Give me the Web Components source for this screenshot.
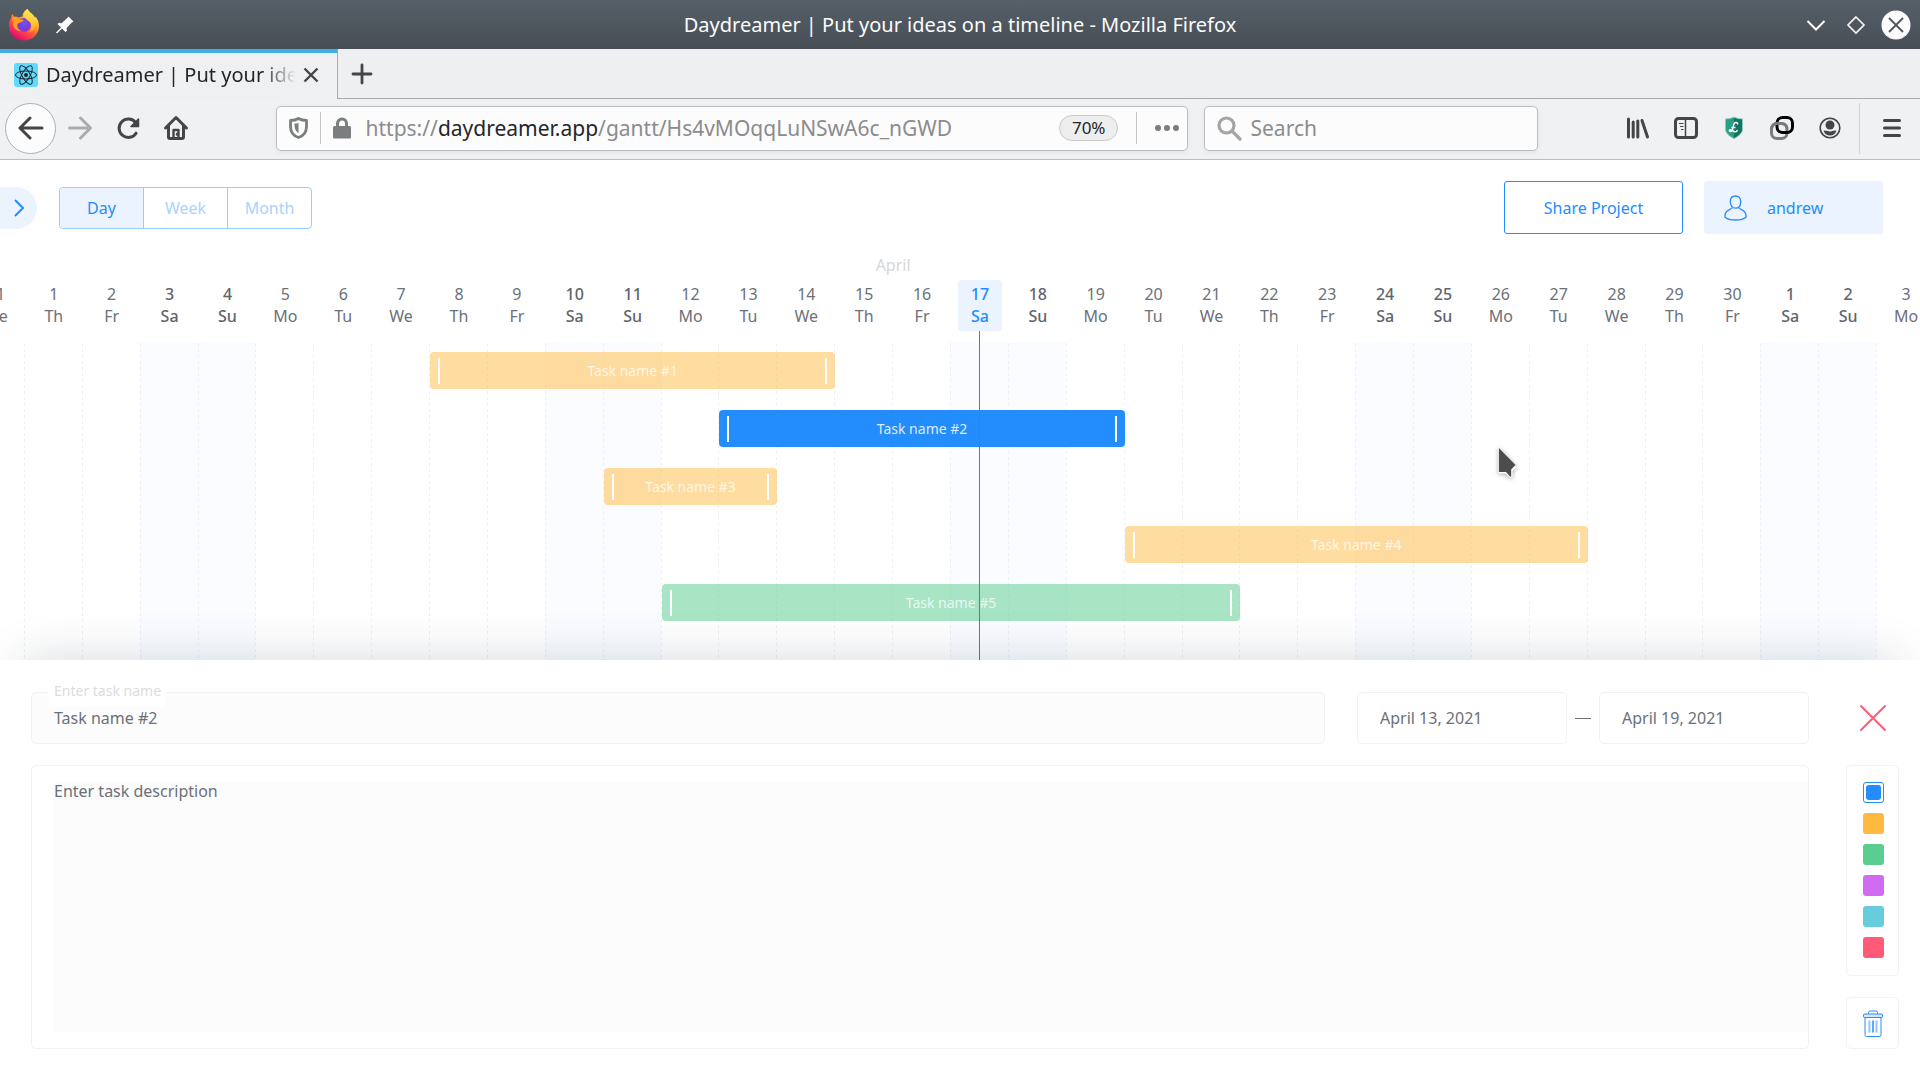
<!DOCTYPE html>
<html lang="en">
<head>
<meta charset="utf-8">
<title>Daydreamer | Put your ideas on a timeline</title>
<style>
  html, body { margin: 0; height: 100%; }
  body {
    font-family: "Noto Sans", sans-serif;
    font-size: 16px;
    color: #6b7178;
    background: #fff;
    --blue: #248dfd;
    --pale: #ebf3ff;
    --line: #f2f2f2;
    --ink: #434547;
  }
</style>
</head>
<body>
<browser-window></browser-window>

<script>
const define = (name, html, setup) => {
  const template = document.createElement('template');
  template.innerHTML = html;
  customElements.define(name, class extends HTMLElement {
    constructor() {
      super();
      this.attachShadow({ mode: 'open' }).append(template.content.cloneNode(true));
    }
    connectedCallback() {
      if (setup && !this.ready) { this.ready = true; setup(this, this.shadowRoot); }
    }
  });
};

const reset = `
  :host, *, *::before, *::after { box-sizing: border-box; }
  button, input, textarea { font: inherit; color: inherit; margin: 0; border: 0; background: none; }
  button { padding: 0; cursor: pointer; }
  svg { display: block; }
`;

/* Icon button used in the title bar and the navigation bar */
define('icon-button', `
<style>${reset}
  :host { display: block; flex: none; width: 48px; color: var(--ink); }
  button { display: flex; width: 100%; height: 48px; align-items: center; justify-content: center; }
</style>
<button><slot></slot></button>`, (el, root) => {
  root.querySelector('button').setAttribute('aria-label', el.getAttribute('label'));
});

define('title-bar', `
<style>${reset}
  :host { display: flex; align-items: center; height: 49px; padding: 0 4px; color: #fcfcfc;
    background: linear-gradient(#566069, #474d54); font-size: 20px; line-height: 28px; }
  .side { display: flex; flex: 1; align-items: center; gap: 16px; }
  .start { padding-left: 5px; }
  .end { justify-content: flex-end; gap: 0; padding-right: 0; }
  .start, .end { flex-basis: 5px; }
  icon-button { width: 40px; color: #fcfcfc; }
</style>
<div class="side start">
  <svg width="30" height="32" viewBox="0 0 30 32">
    <defs>
      <linearGradient id="fox" x1=".85" y1=".1" x2=".3" y2="1">
        <stop offset="0" stop-color="#fff44f"/><stop offset=".3" stop-color="#ffb22e"/>
        <stop offset=".58" stop-color="#ff5a36"/><stop offset="1" stop-color="#e5007d"/>
      </linearGradient>
      <radialGradient id="globe" cx=".5" cy=".35" r=".65">
        <stop offset="0" stop-color="#6a57f0"/><stop offset=".6" stop-color="#7a3bdc"/><stop offset="1" stop-color="#a036c8"/>
      </radialGradient>
      <linearGradient id="tail" x1=".6" y1="0" x2=".4" y2="1">
        <stop offset="0" stop-color="#fff44f"/><stop offset="1" stop-color="#ff9a24"/>
      </linearGradient>
    </defs>
    <path fill="url(#fox)" d="M18.500 0c1 2.500 3.500 4 5.500 6 1 1 1.500 2 2 3l.5-1.500c2.500 3 3.500 6.500 3.500 9.500 0 8.500-6.800 14.500-15 14.500S0 25 0 17c0-3.500.8-6 2.300-8.500l.3-2.500c.2-.3.600-.7 1-1 .3 1.200.8 2 1.400 2.600 1.500-.3 3 0 4.500 1l4-1c0-3 2-6 5-7.600z"/>
    <circle cx="15" cy="16" r="7" fill="url(#globe)"/>
    <path fill="url(#tail)" d="M18.500 0c1 2.500 3.500 4 5.500 6 3 3.500 3.500 8 2 12-1.400 3.500-4 5-6.500 5.500 3-2.500 4-6.500 1.500-10-1.500-2-3.500-2.500-6-5.500-1.500-3 .5-6.500 3.500-8z"/>
    <path fill="#ff9b1f" d="M3 9c3-2 6-1 8 1.500h3.500c.3 1.500-1.500 2.500-3.500 3l-2.500 1.500c-1 2.500 1 6.500 4.500 7.500-5 0-9-3.500-9-8 0-2-.5-3.500-1-5.500z"/>
  </svg>
  <svg width="20" height="20" viewBox="0 0 20 20" fill="#fcfcfc">
    <path d="M13.500 1.500l5 5-2 1.300-5 5.500.5 2.500-1.500 1.200-3.500-3.500L2 18.500l-1-1 5-5L2.500 9 4 7.800l2.500.4 5.500-5z"/>
  </svg>
</div>
<span>Daydreamer | Put your ideas on a timeline - Mozilla Firefox</span>
<div class="side end">
  <icon-button label="Minimize"><svg width="20" height="20" fill="none" stroke="currentColor" stroke-width="2"><path d="M1.500 6L10 14.500 18.500 6"/></svg></icon-button>
  <icon-button label="Maximize"><svg width="20" height="20" fill="none" stroke="currentColor" stroke-width="1.600"><path d="M10 2l8 8-8 8-8-8z"/></svg></icon-button>
  <icon-button label="Close window"><svg width="30" height="30"><circle cx="15" cy="15" r="14.500" fill="currentColor"/><path d="M8 8l14 14M22 8L8 22" stroke="#4d565e" stroke-width="1.800"/></svg></icon-button>
</div>`);

define('tab-strip', `
<style>${reset}
  :host { display: flex; height: 50px; background: #eeeff1; color: #232629; font-size: 20px; line-height: 28px; }
  .tab { display: flex; width: 338px; align-items: center; padding: 0 0 2px 14px;
    border-top: 4px solid #3daee9; border-right: 1px solid #a8aaad; background: #eff0f2; }
  .tab span { flex: 1; margin-left: 8px; overflow: hidden; white-space: nowrap;
    -webkit-mask-image: linear-gradient(90deg, #000 215px, transparent 250px);
    mask-image: linear-gradient(90deg, #000 215px, transparent 250px); }
  .tab icon-button { width: 32px; margin-right: 10px; }
  .rest { display: flex; flex: 1; align-items: center; border-bottom: 1px solid #a8aaad; }
</style>
<div class="tab">
  <svg width="24" height="24" viewBox="0 0 24 24" fill="none" stroke="#20232a">
    <rect width="24" height="24" rx="3" fill="#61dafb" stroke="none"/>
    <ellipse cx="12" cy="12" rx="10.500" ry="4"/>
    <ellipse cx="12" cy="12" rx="10.500" ry="4" transform="rotate(60 12 12)"/>
    <ellipse cx="12" cy="12" rx="10.500" ry="4" transform="rotate(120 12 12)"/>
    <circle cx="12" cy="12" r="2" fill="#20232a" stroke="none"/>
  </svg>
  <span>Daydreamer | Put your ideas on a timeline</span>
  <icon-button label="Close tab"><svg width="16" height="16" fill="none" stroke="currentColor" stroke-width="2.400"><path d="M1.500 1.500l13 13M14.500 1.500l-13 13"/></svg></icon-button>
</div>
<div class="rest">
  <icon-button label="New tab"><svg width="22" height="22" fill="none" stroke="currentColor" stroke-width="2.800" stroke-linecap="round"><path d="M11 2v18M2 11h18"/></svg></icon-button>
</div>`);

define('nav-bar', `
<style>${reset}
  :host { display: flex; height: 61px; align-items: center; padding: 0 4px 2px 5px;
    border-bottom: 1px solid #bbbdbf; background: #f0f1f3; font-size: 21px; line-height: 28px; color: #8a8c8e; }
  .back { display: flex; flex: none; width: 51px; height: 51px; align-items: center; justify-content: center;
    color: var(--ink); border: 1px solid #adafb1; border-radius: 50%; background: #fcfcfc; }
  .off { opacity: .4; }
  .space { flex: 5; }
  .field { display: flex; height: 45px; align-items: center; border: 1px solid #bcbec1; border-radius: 5px;
    background: #fcfcfc; box-shadow: 0 1px 5px rgba(0,0,0,.07); }
  .url { flex: 59; padding: 0 8px 0 12px; }
  .search { flex: none; width: 334px; margin-left: 16px; padding-left: 12px; gap: 8px; }
  .search input { flex: 1; min-width: 0; padding: 0; outline: 0; }
  .search input::placeholder { color: #8a8c8e; opacity: 1; }
  .address { flex: 1; margin-left: 15px; white-space: nowrap; outline: 0; }
  .address b { font-weight: 400; color: #232629; }
  .rule { width: 1px; height: 32px; background: #c4c6c8; }
  .rule.a { margin: 0 12px; }
  .rule.b { margin: 0 18px; }
  .zoom { height: 26px; padding: 0 12px; border: 1px solid #c9cacb; border-radius: 13px; background: #eeeeee;
    color: #232629; font-size: 17px; line-height: 24px; }
  .more { display: flex; height: 40px; align-items: center; color: #7b7e7f; }
  .rule.menu { height: 51px; margin: 0 8px 0 5px; background: #d3d4d6; }
</style>
<button class="back" aria-label="Back"><svg width="26" height="24" fill="none" stroke="currentColor" stroke-width="3" stroke-linecap="round" stroke-linejoin="round"><path d="M2 12h22M12 2L2 12l10 10"/></svg></button>
<icon-button class="off" label="Forward"><svg width="24" height="24" fill="none" stroke="currentColor" stroke-width="3" stroke-linecap="round" stroke-linejoin="round"><path d="M1.500 12h21M12.500 2l10 10-10 10"/></svg></icon-button>
<icon-button label="Reload"><svg width="24" height="24" fill="none" stroke="currentColor" stroke-width="3" stroke-linecap="round" stroke-linejoin="round"><path d="M20.100 17.200A9.200 9.200 0 1 1 19.500 6.500"/><path d="M22.500 3v7.500h-7.500z" fill="currentColor" stroke-width="1.500"/></svg></icon-button>
<icon-button label="Home"><svg width="26" height="26" fill="none" stroke="currentColor" stroke-width="3" stroke-linejoin="round" stroke-linecap="round"><path d="M2.500 13L13 2.500 23.500 13M5.500 11v11q0 1.500 1.500 1.500h12q1.500 0 1.500-1.500V11"/><path d="M10.500 23v-8h5v8M14 19v.5" stroke-width="2.400"/></svg></icon-button>
<div class="space"></div>
<div class="field url">
  <svg width="19" height="22" viewBox="0 0 19 22" fill="none" stroke="#7b7e7f" stroke-width="2.800"><path d="M1.500 3.500q4.500 0 8-2 3.500 2 8 2v6c0 6-3.500 9.500-8 11-4.500-1.500-8-5-8-11z" stroke-linejoin="round"/><path d="M9.500 6v10c-2.500-1.500-4-3.500-4-9.500 2 0 3 0 4-.5z" fill="#7b7e7f" stroke="none"/></svg>
  <div class="rule a"></div>
  <svg width="18" height="22" viewBox="0 0 18 22" fill="#7b7e7f"><rect y="9" width="18" height="12.500" rx="1.500"/><path d="M4.500 10V6.500a4.500 4.500 0 0 1 9 0V10" fill="none" stroke="#7b7e7f" stroke-width="3"/></svg>
  <div class="address" role="textbox" aria-label="Address" contenteditable="true" spellcheck="false">https://<b>daydreamer.app</b>/gantt/Hs4vMOqqLuNSwA6c_nGWD</div>
  <button class="zoom">70%</button>
  <div class="rule b"></div>
  <button class="more" aria-label="Page actions"><svg width="24" height="8" fill="currentColor"><circle cx="3" cy="4" r="3"/><circle cx="12" cy="4" r="3"/><circle cx="21" cy="4" r="3"/></svg></button>
</div>
<div class="field search">
  <svg width="25" height="25" fill="none" stroke="#a3a5a7" stroke-width="3.200" stroke-linecap="round"><circle cx="9.500" cy="9.500" r="7.500"/><path d="M15 15l8 8"/></svg>
  <input type="text" placeholder="Search" aria-label="Search">
</div>
<div class="space"></div>
<icon-button label="Library"><svg width="24" height="24" fill="none" stroke="currentColor" stroke-width="3" stroke-linecap="round"><path d="M2.500 3v18M7.200 6v15M11.800 5v16M16 4.500l5.500 16.500"/></svg></icon-button>
<icon-button label="Sidebars"><svg width="24" height="22" fill="none" stroke="currentColor"><rect x="1.500" y="1.500" width="21" height="19" rx="3" stroke-width="3"/><path d="M11.500 2v18" stroke-width="1.500"/><path d="M5 6.500h4.500M6 9.500h3.500M7 12.500h2.500" stroke-width="1.200"/></svg></icon-button>
<icon-button label="LocalCDN"><svg width="20" height="24" viewBox="0 0 20 24"><path d="M10 1q3.500 2 8.500 2v10c0 4-4 7.500-8.500 9.500C5.500 20.500 1.500 17 1.500 13V3Q6.500 3 10 1z" fill="#26a085" stroke="#8fc9bc"/><path d="M10 2q3.500 1.500 8 1.500V13c0 4-4 7-8 9z" fill="#14735f"/><path d="M13.500 8.500c.5-2-2.500-3-3.500-.5-.8 2-1 4.500-2 6.500-1 1.500-3 1-2.500-.2.600-1.300 3 .5 4.500 1.200 1.500.5 3-.2 3.500-1.500M7.500 11.500h4" fill="none" stroke="#fff" stroke-width="1.500"/></svg></icon-button>
<icon-button label="Containers"><svg width="24" height="24" fill="none" stroke-width="3"><rect x="1.500" y="7.500" width="15.500" height="15" rx="5.500" stroke="#7c7c7f"/><rect x="7" y="1.500" width="15.500" height="15" rx="5.500" stroke="#000"/><path d="M1.500 14v-1A5.500 5.500 0 0 1 7 7.500h4.500A5.500 5.500 0 0 1 17 12.500" stroke="#7c7c7f"/></svg></icon-button>
<icon-button label="Account"><svg width="22" height="22"><circle cx="11" cy="11" r="9.800" fill="none" stroke="currentColor" stroke-width="1.600"/><circle cx="11" cy="8" r="4.500" fill="currentColor"/><path d="M4.500 13.500q3 .3 3.500.3 3 1.500 6 0l3.500-.3q-1.500 5-6.500 5t-6.500-5z" fill="currentColor"/></svg></icon-button>
<div class="rule menu"></div>
<icon-button label="Menu"><svg width="20" height="20" fill="none" stroke="currentColor" stroke-width="3" stroke-linecap="round"><path d="M2.500 2.500h15M2.500 10h15M2.500 17.500h15"/></svg></icon-button>`);

/* Day / Week / Month switch */
define('scale-switch', `
<style>${reset}
  :host { display: flex; width: 253px; height: 42px; border: 1px solid #99cbff; border-radius: 4px; overflow: hidden; color: #a9d2ff; }
  button { flex: 1; }
  button + button { border-left: 1px solid #99cbff; }
  .on { color: var(--blue); background: var(--pale); }
</style>
<button class="on" aria-pressed="true">Day</button><button aria-pressed="false">Week</button><button aria-pressed="false">Month</button>`);

define('app-header', `
<style>${reset}
  :host { display: flex; align-items: center; padding: 21px 37px 0 0; color: var(--blue); }
  .handle { display: flex; width: 37px; height: 42px; align-items: center; padding-left: 14px; border-radius: 0 21px 21px 0; background: var(--pale); }
  scale-switch { margin: 0 auto 0 22px; }
  .big { display: flex; width: 179px; height: 53px; align-items: center; justify-content: center; border-radius: 3px; }
  .share { margin-right: 21px; border: 1px solid var(--blue); }
  .user { justify-content: flex-start; gap: 20px; padding-left: 20px; background: var(--pale); }
</style>
<button class="handle" aria-label="Open projects"><svg width="11" height="18" fill="none" stroke="currentColor" stroke-width="2"><path d="M1 1l8 8-8 8"/></svg></button>
<scale-switch></scale-switch>
<button class="big share">Share Project</button>
<button class="big user"><svg width="23" height="26" fill="none" stroke="currentColor" stroke-width="1.300"><path d="M11.500 1C8.200 1 6.300 3 6.300 6.500c0 4 2 6.700 5.200 6.700s5.200-2.700 5.200-6.700C16.700 3 14.800 1 11.500 1z"/><path d="M8 12.800C7 15 1 15 1 20.500v1.800C3 24 6.500 25 11.500 25s8.500-1 10.500-2.700v-1.800c0-5.500-6-5.500-7-7.700"/></svg>andrew</button>`);

/* One task bar with its two resize handles; the name comes through the slot */
define('gantt-task', `
<style>${reset}
  :host { display: flex; align-items: center; justify-content: space-between; min-width: 0; padding: 0 8px; border-radius: 4px;
    background: rgba(255,186,63,.5); color: rgba(255,255,255,.75); font-size: 14px; line-height: 20px; }
  :host([tone="blue"]) { background: var(--blue); color: rgba(255,255,255,.85); }
  :host([tone="green"]) { background: rgba(90,205,144,.52); }
  i { width: 2px; height: 26px; background: #fff; cursor: ew-resize; }
</style>
<i></i><slot></slot><i></i>`);

define('gantt-chart', `
<style>${reset}
  :host { display: flex; flex-direction: column; overflow: hidden; }
  .board { display: grid; flex: 1; grid-template-columns: repeat(34, minmax(0, 1fr)); grid-template-rows: 24px 51px minmax(0, 1fr);
    margin: 0 -15px 0 -33px; padding-top: 22px; }
  .month { grid-area: 1 / 2 / 2 / 32; text-align: center; line-height: 18px; color: #d6d6d6; }
  .day { grid-row: 2; justify-self: center; width: 44px; padding-top: 3px; border-radius: 4px; text-align: center; line-height: 22px; }
  .day span { display: block; }
  .weekend { font-weight: 500; color: #5f656c; }
  .today { color: var(--blue); background: var(--pale); }
  .lane { grid-row: 3; margin: 12px 1px 0 -1px; }
  .lane::before { content: ""; display: block; width: 1px; height: 100%; background: repeating-linear-gradient(#e9f1fd 0 3px, transparent 3px 6px); }
  .lane.weekend { background: #fafcff; }
  .tasks { display: grid; grid-area: 3 / 1 / 4 / -1; grid-template-columns: subgrid; grid-auto-rows: 37px; row-gap: 21px; padding-top: 21px; }
  .now { grid-row: 3; justify-self: center; width: 1px; background: #2a86e0; }
</style>
<div class="board">
  <div class="month">April</div>
  <div class="tasks">
    <gantt-task style="grid-area: 1 / 9 / 2 / 16">Task name #1</gantt-task>
    <gantt-task style="grid-area: 2 / 14 / 3 / 21" tone="blue">Task name #2</gantt-task>
    <gantt-task style="grid-area: 3 / 12 / 4 / 15">Task name #3</gantt-task>
    <gantt-task style="grid-area: 4 / 21 / 5 / 29">Task name #4</gantt-task>
    <gantt-task style="grid-area: 5 / 13 / 6 / 23" tone="green">Task name #5</gantt-task>
  </div>
</div>`, (el, root) => {
  const board = root.querySelector('.board');
  const tasks = root.querySelector('.tasks');
  const names = ['Su', 'Mo', 'Tu', 'We', 'Th', 'Fr', 'Sa'];
  for (let i = 0; i < 34; i++) {
    const date = new Date(2021, 2, 31 + i);
    const weekend = date.getDay() % 6 === 0 ? ' weekend' : '';
    const today = i === 17;
    const day = document.createElement('div');
    day.className = 'day' + weekend + (today ? ' today' : '');
    day.style.gridColumn = i + 1;
    day.innerHTML = '<span>' + date.getDate() + '</span><span>' + names[date.getDay()] + '</span>';
    const lane = document.createElement('div');
    lane.className = 'lane' + weekend;
    lane.style.gridColumn = i + 1;
    board.insertBefore(day, tasks);
    board.insertBefore(lane, tasks);
    if (today) {
      const now = document.createElement('div');
      now.className = 'now';
      now.style.gridColumn = i + 1;
      board.append(now);
    }
  }
});

define('color-picker', `
<style>${reset}
  :host { display: flex; flex: 1; flex-direction: column; align-items: center; gap: 10px; padding: 16px 0 16px 2px; border: 1px solid var(--line); border-radius: 5px; }
  input { display: grid; appearance: none; width: 21px; height: 21px; place-items: center; border-radius: 3px; background: var(--c); cursor: pointer; }
  input:checked { border: 1px solid var(--c); background: none; }
  input:checked::before { content: ""; width: 15px; height: 15px; border-radius: 3px; background: var(--c); }
</style>
<input type="radio" name="color" aria-label="Blue" style="--c: #248dfd" checked>
<input type="radio" name="color" aria-label="Orange" style="--c: #ffba3f">
<input type="radio" name="color" aria-label="Green" style="--c: #5acd90">
<input type="radio" name="color" aria-label="Purple" style="--c: #d06bf2">
<input type="radio" name="color" aria-label="Cyan" style="--c: #67cddc">
<input type="radio" name="color" aria-label="Red" style="--c: #ff5b78">`);

define('task-panel', `
<style>${reset}
  :host { display: grid; position: relative; grid-template: 52px 284px / minmax(0, 1fr) 53px; gap: 21px 37px; padding: 32px 21px 31px 31px;
    background: #fff; box-shadow: 0 -20px 50px -24px rgba(20,35,55,.2); }
  .top { display: flex; align-items: center; }
  .name { position: relative; flex: 1; height: 52px; margin-right: 32px; }
  .box { border: 1px solid var(--line); border-radius: 5px; outline: 0; }
  .name input { width: 100%; height: 100%; padding: 0 22px; background: #fcfcfc; }
  .name label { position: absolute; left: 18px; top: -11px; padding: 0 5px 6px; background: #fff; color: #dcdcdc; font-size: 14px; line-height: 20px; }
  .date { width: 210px; height: 52px; padding: 0 22px; }
  .dash { width: 16px; height: 1px; margin: 0 8px; background: #6b7178; }
  .close { display: flex; align-items: center; justify-content: center; color: #ff5b78; }
  .text { display: flex; padding: 16px 0 16px 22px; }
  textarea { flex: 1; padding: 0; line-height: 18px; background: #fcfcfc; resize: none; outline: 0; }
  .side { display: flex; flex-direction: column; gap: 21px; }
  .trash { display: flex; height: 52px; align-items: center; justify-content: center; color: var(--blue); }
</style>
<div class="top">
  <div class="name"><input class="box" id="name" type="text" value="Task name #2"><label for="name">Enter task name</label></div>
  <input class="box date" type="text" value="April 13, 2021" aria-label="Start date">
  <div class="dash"></div>
  <input class="box date" type="text" value="April 19, 2021" aria-label="End date">
</div>
<button class="close" aria-label="Close panel"><svg width="28" height="28" fill="none" stroke="currentColor" stroke-width="2" stroke-linecap="round"><path d="M2 2l24 24M26 2L2 26"/></svg></button>
<div class="box text"><textarea aria-label="Task description" spellcheck="false">Enter task description</textarea></div>
<div class="side">
  <color-picker></color-picker>
  <button class="box trash" aria-label="Delete task"><svg width="20" height="27" fill="none" stroke="currentColor"><path d="M5.500 4V2.500q0-1.500 1.500-1.500h6q1.500 0 1.500 1.500V4"/><rect x=".5" y="4" width="19" height="3.500" rx="1" fill="#d3e8ff"/><path d="M2 7.500v17q0 2 1.500 2h13q1.500 0 1.500-2v-17"/><path d="M6.500 10.500v12M13.500 10.500v12" stroke="#8fc4ff" stroke-width="2"/><path d="M10 10.500v12" stroke-width="1.500"/></svg></button>
</div>`);

define('mouse-pointer', `
<style>
  :host { display: block; position: absolute; left: 1496px; top: 444px; pointer-events: none; }
  svg { display: block; filter: drop-shadow(0 1px 2px rgba(0,0,0,.35)); }
</style>
<svg width="24" height="36"><path d="M2.500 2v27.500h7l5 4.500 2-1v-6l4-4z" fill="#fff"/><path d="M3 4v24h7l4 4.500h1.200v-7l4.300-4.500z" fill="#4d4d4d"/></svg>`);

define('browser-window', `
<style>
  :host { display: flex; flex-direction: column; min-height: 100vh; }
  gantt-chart { flex: 1; }
</style>
<title-bar></title-bar>
<tab-strip></tab-strip>
<nav-bar></nav-bar>
<app-header></app-header>
<gantt-chart></gantt-chart>
<task-panel></task-panel>
<mouse-pointer></mouse-pointer>`);
</script>
</body>
</html>
